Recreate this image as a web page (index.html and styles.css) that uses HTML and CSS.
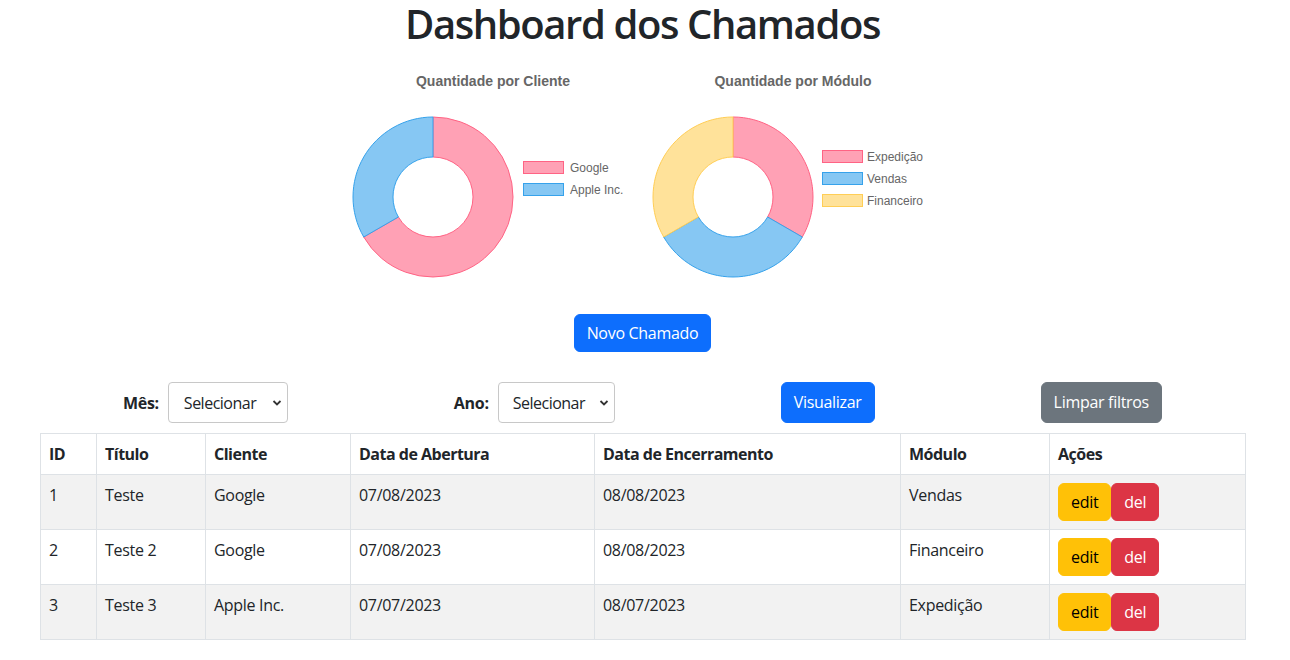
FILE: index.html
```html
<!DOCTYPE html>
<html lang="pt-BR">
<head>
<meta charset="utf-8">
<title>Dashboard dos Chamados</title>
<link rel="stylesheet" href="styles.css">
</head>
<body>
<div class="page">
  <h1 class="title">Dashboard dos Chamados</h1>

  <div class="charts">
    <svg class="chart" width="300" height="240" viewBox="0 0 300 240">
      <text class="chart-title" x="150" y="30" text-anchor="middle">Quantidade por Cliente</text>
      <path class="seg-pink" d="M90,61 A80,80 0 1 1 20.72,181 L55.36,161 A40,40 0 1 0 90,101 Z"/>
      <path class="seg-blue" d="M20.72,181 A80,80 0 0 1 90,61 L90,101 A40,40 0 0 0 55.36,161 Z"/>
      <rect class="seg-pink" x="180.5" y="105.5" width="40" height="12"/>
      <text class="legend" x="227" y="115.5">Google</text>
      <rect class="seg-blue" x="180.5" y="127.5" width="40" height="12"/>
      <text class="legend" x="227" y="137.5">Apple Inc.</text>
    </svg>
    <svg class="chart" width="300" height="240" viewBox="0 0 300 240">
      <text class="chart-title" x="150" y="30" text-anchor="middle">Quantidade por Módulo</text>
      <path class="seg-pink" d="M90,61 A80,80 0 0 1 159.28,181 L124.64,161 A40,40 0 0 0 90,101 Z"/>
      <path class="seg-blue" d="M159.28,181 A80,80 0 0 1 20.72,181 L55.36,161 A40,40 0 0 0 124.64,161 Z"/>
      <path class="seg-yellow" d="M20.72,181 A80,80 0 0 1 90,61 L90,101 A40,40 0 0 0 55.36,161 Z"/>
      <rect class="seg-pink" x="179.5" y="94.5" width="40" height="12"/>
      <text class="legend" x="224" y="104.5">Expedição</text>
      <rect class="seg-blue" x="179.5" y="116.5" width="40" height="12"/>
      <text class="legend" x="224" y="126.5">Vendas</text>
      <rect class="seg-yellow" x="179.5" y="138.5" width="40" height="12"/>
      <text class="legend" x="224" y="148.5">Financeiro</text>
    </svg>
  </div>

  <div class="new-row">
    <button class="btn btn-primary">Novo Chamado</button>
  </div>

  <div class="filters">
    <div class="filter">
      <label class="filter-label">Mês:</label>
      <span class="select-wrap mes">
        <select class="form-select"><option>Selecionar</option></select>
        <svg class="chev" width="10" height="8" viewBox="0 0 10 8"><path d="M1.5 2 L5 5.5 L8.5 2" fill="none" stroke="#333" stroke-width="1.8"/></svg>
      </span>
    </div>
    <div class="filter">
      <label class="filter-label">Ano:</label>
      <span class="select-wrap ano">
        <select class="form-select"><option>Selecionar</option></select>
        <svg class="chev" width="10" height="8" viewBox="0 0 10 8"><path d="M1.5 2 L5 5.5 L8.5 2" fill="none" stroke="#333" stroke-width="1.8"/></svg>
      </span>
    </div>
    <button class="btn btn-primary btn-filter">Visualizar</button>
    <button class="btn btn-secondary btn-filter">Limpar filtros</button>
  </div>

  <table class="table">
    <colgroup>
      <col class="c-id"><col class="c-tit"><col class="c-cli"><col class="c-ab"><col class="c-enc"><col class="c-mod"><col class="c-acoes">
    </colgroup>
    <thead>
      <tr><th>ID</th><th>Título</th><th>Cliente</th><th>Data de Abertura</th><th>Data de Encerramento</th><th>Módulo</th><th>Ações</th></tr>
    </thead>
    <tbody>
      <tr class="striped"><td>1</td><td>Teste</td><td>Google</td><td>07/08/2023</td><td>08/08/2023</td><td>Vendas</td><td><div class="actions"><button class="btn btn-warning">edit</button><button class="btn btn-danger">del</button></div></td></tr>
      <tr><td>2</td><td>Teste 2</td><td>Google</td><td>07/08/2023</td><td>08/08/2023</td><td>Financeiro</td><td><div class="actions"><button class="btn btn-warning">edit</button><button class="btn btn-danger">del</button></div></td></tr>
      <tr class="striped"><td>3</td><td>Teste 3</td><td>Apple Inc.</td><td>07/07/2023</td><td>08/07/2023</td><td>Expedição</td><td><div class="actions"><button class="btn btn-warning">edit</button><button class="btn btn-danger">del</button></div></td></tr>
    </tbody>
  </table>
</div>
</body>
</html>
```
FILE: styles.css
```css
* { box-sizing: border-box; }
html, body { margin: 0; padding: 0; background: #fff; }
body {
  font-family: "Open Sans", "Noto Sans", sans-serif;
  font-size: 16px;
  line-height: 24px;
  color: #212529;
  letter-spacing: -0.3px;
}
.page { width: 1285px; }

.title {
  margin: 0 0 8px;
  text-align: center;
  font-size: 40px;
  line-height: 48px;
  font-weight: 600;
  letter-spacing: -1.4px;
}

.charts {
  display: flex;
  justify-content: center;
  height: 240px;
}
.chart { display: block; }
.chart-title {
  font-family: "Liberation Sans", Arial, sans-serif;
  font-size: 14px;
  font-weight: 700;
  fill: #666;
  letter-spacing: 0;
}
.legend {
  font-family: "Liberation Sans", Arial, sans-serif;
  font-size: 12px;
  fill: #666;
  letter-spacing: 0;
}
.seg-pink { fill: #ffa1b5; stroke: #ff6384; stroke-width: 1; }
.seg-blue { fill: #86c7f3; stroke: #36a2eb; stroke-width: 1; }
.seg-yellow { fill: #ffe29a; stroke: #ffce56; stroke-width: 1; }

.btn {
  font-family: inherit;
  font-size: 16px;
  line-height: 24px;
  letter-spacing: -0.3px;
  padding: 6px 12px;
  border: 1px solid transparent;
  border-radius: 6px;
  cursor: pointer;
  display: inline-block;
}
.btn-primary { background: #0d6efd; border-color: #0d6efd; color: #fff; }
.btn-secondary { background: #6c757d; border-color: #6c757d; color: #fff; }
.btn-warning { background: #ffc107; border-color: #ffc107; color: #000; }
.btn-danger { background: #dc3545; border-color: #dc3545; color: #fff; }

.new-row {
  display: flex;
  justify-content: center;
  margin-top: 18px;
}

.filters {
  margin: 30px 40px 0;
  display: flex;
  justify-content: space-around;
  align-items: center;
  height: 41px;
}
.filter { display: flex; align-items: center; gap: 9px; }
.filter-label { font-weight: 700; }
.btn-filter { padding: 7px 12px 8px; }

.select-wrap { position: relative; display: inline-block; }
.form-select {
  appearance: none;
  -webkit-appearance: none;
  font-family: inherit;
  font-size: 16px;
  line-height: 24px;
  letter-spacing: -0.5px;
  color: #212529;
  background: #fff;
  border: 1px solid #c8c8c8;
  border-radius: 4px;
  height: 41px;
  padding: 0 12px 0 15px;
  margin: 0;
}
.mes .form-select { width: 120px; }
.ano .form-select { width: 117px; padding-left: 14px; }
.chev {
  position: absolute;
  right: 6px;
  top: 17px;
  pointer-events: none;
}

.table {
  margin: 10px 40px 0;
  width: 1205px;
  border-collapse: collapse;
  table-layout: fixed;
}
.c-id { width: 56px; }
.c-tit { width: 109px; }
.c-cli { width: 145px; }
.c-ab { width: 244px; }
.c-enc { width: 306px; }
.c-mod { width: 149px; }
.c-acoes { width: 196px; }
.table th, .table td {
  border: 1px solid #dee2e6;
  padding: 8px;
  text-align: left;
  vertical-align: top;
}
.table th { font-weight: 700; letter-spacing: -0.5px; }
.table tr.striped td { background: #f2f2f2; }
.actions { display: flex; }
```
